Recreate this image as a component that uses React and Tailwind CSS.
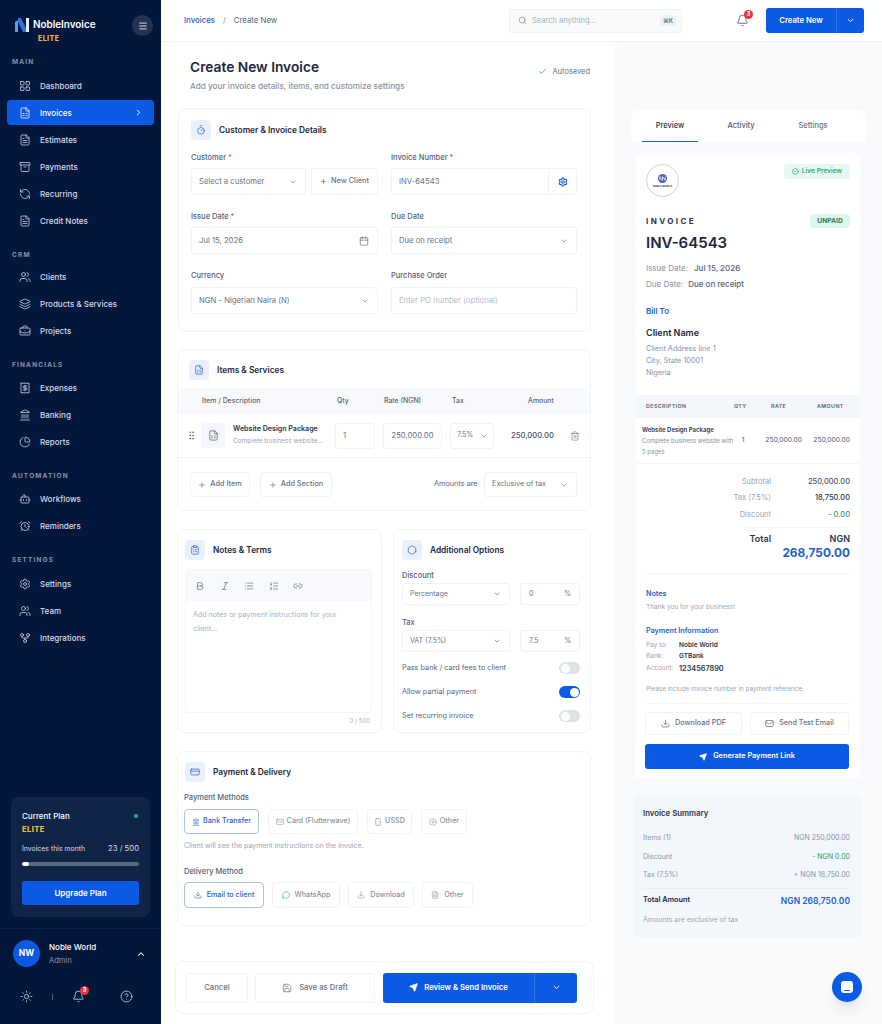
import {
  Archive, Bell, Bold, Bot, BriefcaseBusiness, Calendar, Check, ChevronDown, ChevronRight, ChevronUp,
  CircleCheck, CircleHelp, ClipboardList, CreditCard, Download, FileSpreadsheet, FileText, GitFork, GripVertical, Italic, Landmark,
  Layers, LayoutGrid, Link2, List, ListOrdered, Mail, MessageCircle, Plus, Receipt, RefreshCcw, Save, Search,
  Send, Settings, Sun, Timer, Trash2, Users, Smartphone, CirclePlus,
  AlarmClock, ChartPie, Menu, Hexagon,
} from 'lucide-react';

const sidebarGroups = [
  { label: 'MAIN', top: 'mt-[8px]', gap: 'mt-[4px]', items: [
    ['Dashboard', LayoutGrid], ['Invoices', FileSpreadsheet, true], ['Estimates', FileText],
    ['Payments', Archive], ['Recurring', RefreshCcw], ['Credit Notes', FileText],
  ] },
  { label: 'CRM', top: 'mt-[15px]', gap: 'mt-[2px]', items: [['Clients', Users], ['Products & Services', Layers], ['Projects', BriefcaseBusiness]] },
  { label: 'FINANCIALS', top: 'mt-[15px]', gap: 'mt-[3px]', items: [['Expenses', Receipt], ['Banking', Landmark], ['Reports', ChartPie]] },
  { label: 'AUTOMATION', top: 'mt-[15px]', gap: 'mt-[3px]', items: [['Workflows', Bot], ['Reminders', AlarmClock]] },
  { label: 'SETTINGS', top: 'mt-[15px]', gap: 'mt-[4px]', items: [['Settings', Settings], ['Team', Users], ['Integrations', GitFork]] },
];

function Sidebar() {
  return (
    <aside className="flex h-[1024px] w-[161px] shrink-0 flex-col bg-[#03173d] text-[#d5dce8]">
      <div className="flex h-[48px] items-start justify-between pl-[14px] pr-[8px] pt-[16px]">
        <div className="flex gap-[3px]">
          <svg viewBox="0 0 16 16" className="mt-[1px] h-[16px] w-[16px]">
            <path d="M1 15V5l3-2v12z" fill="#5b9cf5" />
            <path d="M4 1h3l5 10v4H9L4 5z" fill="#2f6fe0" />
            <path d="M12 1h3v14h-3z" fill="#e8eefb" />
          </svg>
          <div>
            <div className="text-[9.9px] font-semibold leading-[16px] text-white">NobleInvoice</div>
            <div className="ml-[5px] mt-[2px] text-[7px] font-extrabold leading-[10px] tracking-[0.06em] text-[#f0b93a]">ELITE</div>
          </div>
        </div>
        <div className="-mt-[1px] flex h-[21px] w-[21px] items-center justify-center rounded-full bg-[#223252]">
          <Menu className="h-[10px] w-[10px] text-white" />
        </div>
      </div>
      <nav className="px-[7px]">
        {sidebarGroups.map((group) => (
          <div key={group.label} className={group.top}>
            <div className="pl-[5px] text-[6.5px] font-bold leading-[12px] tracking-[0.18em] text-[#8492ab]">{group.label}</div>
            <div className={group.gap}>
              {group.items.map(([name, Icon, active]) => (
                <div key={name} className={`flex items-center rounded-[4px] pl-[12px] pr-[11px] ${active ? 'my-[1px] h-[25px] bg-[#0c5ae4] text-white' : 'h-[27px]'}`}>
                  <Icon className="h-[12px] w-[12px] shrink-0" strokeWidth={1.5} />
                  <span className="ml-[9px] flex-1 text-[8px] font-medium">{name}</span>
                  {active && <ChevronRight className="h-[9px] w-[9px]" strokeWidth={2.5} />}
                </div>
              ))}
            </div>
          </div>
        ))}
      </nav>
      <div className="mx-[11px] mb-[11px] mt-auto h-[120px] rounded-[8px] bg-[#102447] px-[11px] pt-[13px]">
        <div className="flex items-center justify-between">
          <span className="text-[8px] font-medium leading-[12px] text-white">Current Plan</span>
          <span className="mr-[1px] h-[4px] w-[4px] rounded-full bg-[#14b8a6]" />
        </div>
        <div className="mt-[3px] text-[7.5px] font-extrabold leading-[10px] tracking-[0.06em] text-[#f0b93a]">ELITE</div>
        <div className="mt-[9px] flex justify-between text-[6.9px] leading-[10px]">
          <span>Invoices this month</span><span className="text-[7.7px]">23 / 500</span>
        </div>
        <div className="mt-[8px] h-[4px] rounded-full bg-[#5a6881]">
          <div className="h-[4px] w-[7px] rounded-full bg-white" />
        </div>
        <button className="mt-[15px] h-[24px] w-full rounded-[3px] bg-[#0c5ae4] text-[8px] font-semibold text-white">Upgrade Plan</button>
      </div>
      <div className="h-[96px] border-t border-[#0f2345] px-[13px] pt-[11px]">
        <div className="flex items-center">
          <div className="flex h-[27px] w-[27px] items-center justify-center rounded-full bg-[#0c5ae4] text-[8.5px] font-bold text-white">NW</div>
          <div className="ml-[9px] flex-1">
            <div className="text-[8px] font-medium leading-[13px] text-white">Noble World</div>
            <div className="text-[7.5px] leading-[13px] text-[#8b97ad]">Admin</div>
          </div>
          <ChevronUp className="mr-[2px] h-[10px] w-[10px] text-white" strokeWidth={2.5} />
        </div>
        <div className="mt-[23px] flex items-center pl-[7px] text-[#cdd5e2]">
          <Sun className="h-[13px] w-[13px]" strokeWidth={1.5} />
          <span className="ml-[19px] h-[6px] w-px bg-[#4d5c78]" />
          <div className="relative ml-[19px]">
            <Bell className="h-[13px] w-[13px]" strokeWidth={1.5} />
            <span className="absolute -right-[4px] -top-[4px] flex h-[9px] w-[9px] items-center justify-center rounded-full bg-[#e5343f] text-[5.5px] font-bold text-white">3</span>
          </div>
          <CircleHelp className="ml-[35px] h-[13px] w-[13px]" strokeWidth={1.5} />
        </div>
      </div>
    </aside>
  );
}

function Card({ className = '', children }) {
  return <section className={`rounded-[8px] border border-[#f0f3f7] bg-white ${className}`}>{children}</section>;
}

function SectionHead({ icon: Icon, title, className = '' }) {
  return (
    <div className={`flex items-center ${className}`}>
      <div className="flex h-[20px] w-[20px] items-center justify-center rounded-[4px] bg-[#e9f0fc]">
        <Icon className="h-[10px] w-[10px] text-[#2563c9]" strokeWidth={1.7} />
      </div>
      <h2 className="ml-[8px] text-[8.3px] font-semibold text-[#1c2740]">{title}</h2>
    </div>
  );
}

function Label({ children, required, className = '' }) {
  return (
    <div className={`text-[7.5px] font-medium leading-[11px] text-[#566178] ${className}`}>
      {children}{required && <span className="text-[#e5484d]"> *</span>}
    </div>
  );
}

function Box({ children, className = '' }) {
  return (
    <div className={`flex items-center rounded-[3px] border border-[#eff2f6] bg-white text-[7.7px] text-[#697386] ${className}`}>{children}</div>
  );
}

function Select({ value, className = '', muted }) {
  return (
    <Box className={`justify-between pl-[7px] pr-[8px] ${muted ? 'text-[#9ba5b5]' : ''} ${className}`}>
      <span>{value}</span>
      <ChevronDown className="h-[8px] w-[8px] text-[#6b7588]" strokeWidth={2} />
    </Box>
  );
}

function Chip({ icon: Icon, children, active, className = '', iconClass = '' }) {
  return (
    <div className={`flex items-center justify-center gap-[3px] rounded-[4px] border text-[7.2px] font-medium ${active ? 'border-[#a9c3ea] text-[#2563c9]' : 'border-[#f1f3f7] text-[#8a93a3]'} ${className}`}>
      <Icon className={`h-[8px] w-[8px] ${iconClass}`} strokeWidth={1.7} />
      {children}
    </div>
  );
}

function Toggle({ on }) {
  return (
    <div className={`flex h-[12px] w-[21px] items-center rounded-full px-[1.5px] ${on ? 'justify-end bg-[#0c5ae4]' : 'bg-[#dfe3ea]'}`}>
      <span className="h-[9px] w-[9px] rounded-full bg-white" />
    </div>
  );
}

function CustomerCard() {
  return (
    <Card className="ml-[17px] h-[224px] w-[413px] px-[12px] pt-[11px]">
      <SectionHead icon={Timer} title="Customer & Invoice Details" />
      <div className="mt-[12px] grid grid-cols-[187px_186px] gap-x-[13px]">
        <div>
          <Label required>Customer</Label>
          <div className="mt-[5px] flex gap-[5px]">
            <Select value="Select a customer" muted className="h-[27px] w-[115px]" />
            <Box className="h-[27px] w-[67px] justify-center gap-[4px] bg-[#fbfcfe] !text-[7.3px] font-medium text-[#2563c9]">
              <Plus className="h-[7px] w-[7px]" strokeWidth={2.5} /> New Client
            </Box>
          </div>
        </div>
        <div>
          <Label required>Invoice Number</Label>
          <Box className="mt-[5px] h-[27px] justify-between pl-[7px]">
            <span>INV-64543</span>
            <div className="flex h-full w-[28px] items-center justify-center border-l border-[#eff2f6]">
              <Settings className="h-[10px] w-[10px] text-[#1d5fd0]" strokeWidth={2.6} />
            </div>
          </Box>
        </div>
        <div className="mt-[16px]">
          <Label required>Issue Date</Label>
          <Box className="mt-[5px] h-[27px] justify-between pl-[7px] pr-[8px]">
            <span>Jul 15, 2026</span>
            <Calendar className="h-[10px] w-[10px] text-[#566178]" strokeWidth={1.5} />
          </Box>
        </div>
        <div className="mt-[16px]">
          <Label>Due Date</Label>
          <Select value="Due on receipt" className="mt-[5px] h-[27px]" />
        </div>
        <div className="mt-[16px]">
          <Label>Currency</Label>
          <Select value="NGN - Nigerian Naira (N)" className="mt-[6px] h-[27px]" />
        </div>
        <div className="mt-[16px]">
          <Label>Purchase Order</Label>
          <Box className="mt-[6px] h-[27px] pl-[7px] text-[#b4bcc9]">Enter PO number (optional)</Box>
        </div>
      </div>
    </Card>
  );
}

function ItemsCard() {
  return (
    <Card className="ml-[16px] mt-[17px] h-[162px] w-[414px]">
      <SectionHead icon={FileSpreadsheet} title="Items & Services" className="pl-[11px] pt-[10px]" />
      <div className="mt-[8px] grid h-[26px] grid-cols-[135px_47px_68px_76px_1fr] items-center bg-[#f7f9fc] pl-[24px] text-[6.9px] font-medium text-[#5c667a]">
        <span>Item / Description</span><span>Qty</span><span>Rate (NGN)</span><span>Tax</span><span>Amount</span>
      </div>
      <div className="flex h-[44px] items-center border-b border-[#f0f3f7] pl-[8px]">
        <GripVertical className="h-[11px] w-[11px] text-[#6b7588]" strokeWidth={2} />
        <div className="ml-[4px] flex h-[25px] w-[24px] items-center justify-center rounded-[4px] bg-[#f3f6fa]">
          <FileSpreadsheet className="h-[11px] w-[11px] text-[#4a5468]" strokeWidth={1.5} />
        </div>
        <div className="ml-[8px] w-[102px]">
          <div className="text-[7.1px] font-semibold leading-[12px] text-[#2b354a]">Website Design Package</div>
          <div className="text-[6.5px] leading-[13px] text-[#9ba5b5]">Complete business website...</div>
        </div>
        <Box className="h-[26px] w-[40px] pl-[7px] text-[#3c465a]">1</Box>
        <Box className="ml-[8px] h-[26px] w-[59px] justify-center text-[#4a5468]">250,000.00</Box>
        <Select value="7.5%" className="ml-[8px] h-[26px] w-[44px] !pl-[6px] !pr-[5px] !text-[7px]" />
        <span className="ml-[16px] w-[44px] text-right text-[7.7px] font-medium text-[#4a5468]">250,000.00</span>
        <Trash2 className="ml-[16px] h-[10px] w-[10px] text-[#6b7588]" strokeWidth={1.5} />
      </div>
      <div className="flex items-center pl-[12px] pt-[14px]">
        <Box className="h-[25px] w-[60px] justify-center gap-[4px] !text-[7.3px] font-medium text-[#2563c9]"><Plus className="h-[8px] w-[8px]" strokeWidth={2} />Add Item</Box>
        <Box className="ml-[10px] h-[25px] w-[72px] justify-center gap-[4px] !text-[7.3px] font-medium text-[#2563c9]"><Plus className="h-[8px] w-[8px]" strokeWidth={2} />Add Section</Box>
        <span className="ml-[102px] w-[44px] whitespace-nowrap text-[7.3px] text-[#5c667a]">Amounts are</span>
        <Select value="Exclusive of tax" muted className="ml-[6px] h-[25px] w-[93px] !text-[7.3px]" />
      </div>
    </Card>
  );
}

function NotesCard() {
  const tools = [Bold, Italic, List, ListOrdered, Link2];
  return (
    <Card className="h-[204px] w-[205px] px-[7px] pt-[10px]">
      <SectionHead icon={ClipboardList} title="Notes & Terms" />
      <div className="mt-[9px] h-[144px] w-[187px] rounded-[3px] border border-[#f3f5f8]">
        <div className="flex h-[31px] items-center gap-[14.5px] bg-[#f7f9fc] pl-[9px] text-[#5c667a]">
          {tools.map((Tool, i) => <Tool key={i} className="h-[10px] w-[10px]" strokeWidth={1.6} />)}
        </div>
        <p className="px-[7px] pt-[7px] text-[7.1px] leading-[13.5px] text-[#a8b1bf]">Add notes or payment instructions for your<br />client...</p>
      </div>
      <div className="mt-[3px] w-[185px] text-right text-[6px] text-[#a8b1bf]">0 / 500</div>
    </Card>
  );
}

function OptionsCard() {
  return (
    <Card className="ml-[11px] h-[204px] w-[198px] pl-[8px] pr-[10px] pt-[10px]">
      <SectionHead icon={Hexagon} title="Additional Options" />
      <Label className="mt-[10px]">Discount</Label>
      <div className="mt-[2px] flex justify-between">
        <Select value="Percentage" className="h-[22px] w-[108px] !text-[7px]" />
        <Box className="h-[22px] w-[60px] justify-between pl-[8px] pr-[8px] !text-[7px]"><span>0</span><span>%</span></Box>
      </div>
      <Label className="mt-[12px]">Tax</Label>
      <div className="mt-[2px] flex justify-between">
        <Select value="VAT (7.5%)" className="h-[22px] w-[108px] !text-[7px]" />
        <Box className="h-[22px] w-[60px] justify-between pl-[8px] pr-[8px] !text-[7px]"><span>7.5</span><span>%</span></Box>
      </div>
      <div className="mt-[10px] flex h-[12px] items-center justify-between text-[7.3px] text-[#5c667a]"><span>Pass bank / card fees to client</span><Toggle /></div>
      <div className="mt-[12px] flex h-[12px] items-center justify-between text-[7.3px] text-[#5c667a]"><span>Allow partial payment</span><Toggle on /></div>
      <div className="mt-[12px] flex h-[12px] items-center justify-between text-[7.3px] text-[#5c667a]"><span>Set recurring invoice</span><Toggle /></div>
    </Card>
  );
}

function PaymentCard() {
  return (
    <Card className="ml-[16px] mt-[18px] h-[175px] w-[414px] px-[6px] pt-[10px]">
      <SectionHead icon={CreditCard} title="Payment & Delivery" className="pl-[1px]" />
      <Label className="mt-[10px]">Payment Methods</Label>
      <div className="mt-[6px] flex h-[25px] gap-[9px]">
        <Chip active icon={Landmark} className="w-[75px]">Bank Transfer</Chip>
        <Chip icon={Mail} className="w-[90px]">Card (Flutterwave)</Chip>
        <Chip icon={Smartphone} className="w-[45px]">USSD</Chip>
        <Chip icon={CirclePlus} className="w-[46px]">Other</Chip>
      </div>
      <p className="mt-[7px] text-[7px] leading-[10px] text-[#9ba5b5]">Client will see the payment instructions on the invoice.</p>
      <Label className="mt-[15px]">Delivery Method</Label>
      <div className="mt-[5px] flex h-[26px] gap-[8px]">
        <Chip active icon={Download} className="w-[80px] gap-[5px]">Email to client</Chip>
        <Chip icon={MessageCircle} iconClass="text-[#22a565]" className="w-[68px] gap-[5px]">WhatsApp</Chip>
        <Chip icon={Download} className="w-[66px] gap-[5px]">Download</Chip>
        <Chip icon={FileText} className="w-[51px] gap-[5px]">Other</Chip>
      </div>
    </Card>
  );
}

function FooterBar() {
  return (
    <div className="ml-[14px] mt-[35px] flex h-[53px] w-[419px] items-center rounded-[8px] border border-[#f0f3f7] bg-white pl-[10px]">
      <Box className="h-[30px] w-[62px] justify-center font-medium text-[#4a5468]">Cancel</Box>
      <Box className="ml-[7px] h-[30px] w-[120px] justify-center gap-[7px] font-medium text-[#4a5468]"><Save className="h-[10px] w-[10px]" strokeWidth={1.6} />Save as Draft</Box>
      <div className="ml-[8px] flex h-[30px] w-[194px] items-center rounded-[3px] bg-[#0c5ae4] text-white">
        <div className="flex flex-1 items-center justify-center gap-[6px] text-[7.7px] font-semibold"><Send className="h-[9px] w-[9px]" fill="currentColor" />Review & Send Invoice</div>
        <div className="flex h-full w-[43px] items-center justify-center border-l border-[#2f72e8]"><ChevronDown className="h-[9px] w-[9px]" strokeWidth={2.5} /></div>
      </div>
    </div>
  );
}

function TopBar() {
  return (
    <header className="flex h-[42px] items-center border-b border-[#eff2f6] bg-white pl-[23px]">
      <div className="flex w-[325px] items-center text-[7.8px]">
        <span className="font-medium text-[#2563c9]">Invoices</span>
        <span className="ml-[8px] text-[#8a93a3]">/</span>
        <span className="ml-[8px] text-[#566178]">Create New</span>
      </div>
      <div className="flex h-[24px] w-[173px] items-center rounded-[3px] border border-[#eef1f5] bg-[#f8fafc] pl-[8px] pr-[5px]">
        <Search className="h-[9px] w-[9px] text-[#6b7588]" strokeWidth={1.6} />
        <span className="ml-[5px] flex-1 text-[7.5px] text-[#a8b1bf]">Search anything...</span>
        <span className="rounded-[2px] bg-[#eef1f5] px-[3px] py-[1px] text-[6px] font-semibold text-[#6b7588]">⌘K</span>
      </div>
      <div className="relative ml-[54px]">
        <Bell className="h-[13px] w-[13px] text-[#4a5468]" strokeWidth={1.5} />
        <span className="absolute -right-[4px] -top-[4px] flex h-[9px] w-[9px] items-center justify-center rounded-full bg-[#e5343f] text-[5.5px] font-bold text-white">3</span>
      </div>
      <div className="ml-[17px] flex h-[25px] w-[98px] items-center rounded-[3px] bg-[#0c5ae4] text-white">
        <span className="flex-1 text-center text-[7.7px] font-semibold">Create New</span>
        <div className="flex h-full w-[28px] items-center justify-center border-l border-[#2f72e8]"><ChevronDown className="h-[9px] w-[9px]" strokeWidth={2.5} /></div>
      </div>
    </header>
  );
}

function Preview() {
  return (
    <div className="ml-[16px] mt-[68px] h-[670px] w-[235px] rounded-[8px] bg-[#f8fafd]">
      <div className="flex h-[32px] rounded-t-[8px] bg-white text-[7.5px] font-medium">
        <div className="ml-[11px] flex w-[56px] items-center justify-center border-b-[1.5px] border-[#2563c9] text-[#2b354a]">Preview</div>
        <div className="ml-[14px] flex w-[58px] items-center justify-center text-[#566178]">Activity</div>
        <div className="ml-[14px] flex w-[58px] items-center justify-center text-[#697386]">Settings</div>
      </div>
      <div className="mx-[5px] mt-[13px] h-[623px] w-[224px] bg-white">
        <div className="flex items-start justify-between px-[10px] pt-[9px]">
          <div className="flex h-[33px] w-[33px] flex-col items-center justify-center rounded-full border border-[#cfd3e0]">
            <svg viewBox="0 0 12 12" className="h-[11px] w-[11px]"><circle cx="6" cy="6" r="5" fill="#5566b8" /><path d="M3 8V4l3 4V4l3 4V4" stroke="#fff" fill="none" strokeWidth="0.8" /></svg>
            <span className="text-[2.6px] font-bold leading-[4px] text-[#2b354a]">NOBLE WORLD</span>
          </div>
          <div className="flex h-[15px] w-[66px] items-center justify-center gap-[3px] rounded-[4px] bg-[#e6f8ef] text-[6.7px] font-medium text-[#1e9e63]">
            <CircleCheck className="h-[7px] w-[7px]" strokeWidth={2} />Live Preview
          </div>
        </div>
        <div className="mt-[17px] flex h-[14px] items-center justify-between px-[10px]">
          <span className="text-[8px] font-bold tracking-[0.3em] text-[#2b354a]">INVOICE</span>
          <span className="flex h-[14px] w-[40px] items-center justify-center rounded-[4px] bg-[#dff6ea] text-[6.7px] font-bold text-[#16875a]">UNPAID</span>
        </div>
        <div className="mt-[5px] pl-[10px] text-[15px] font-semibold leading-[20px] text-[#1c2740]">INV-64543</div>
        <div className="mt-[8px] pl-[10px] text-[8px] leading-[15.5px] text-[#8a93a3]">
          <div>Issue Date:<span className="ml-[6px] font-medium text-[#566178]">Jul 15, 2026</span></div>
          <div>Due Date:<span className="ml-[5px] font-medium text-[#566178]">Due on receipt</span></div>
        </div>
        <div className="mt-[14px] pl-[10px] text-[8px] font-semibold leading-[11px] text-[#2563c9]">Bill To</div>
        <div className="mt-[9px] pl-[10px] text-[9px] font-semibold leading-[13px] text-[#1c2740]">Client Name</div>
        <div className="mt-[4px] pl-[10px] text-[7.3px] leading-[12px] text-[#8a93a3]">Client Address line 1<br />City, State 10001<br />Nigeria</div>
        <div className="mt-[16px] grid h-[23px] grid-cols-[88px_37px_46px_1fr] items-center bg-[#f3f6fa] pl-[10px] text-[5.3px] font-semibold tracking-[0.08em] text-[#566178]">
          <span>DESCRIPTION</span><span>QTY</span><span>RATE</span><span>AMOUNT</span>
        </div>
        <div className="flex h-[46px] items-center border-b border-[#f3f5f8] pl-[6px] pr-[10px]">
          <div className="w-[94px]">
            <div className="text-[6px] font-semibold leading-[11px] text-[#2b354a]">Website Design Package</div>
            <div className="text-[6px] leading-[11px] text-[#8a93a3]">Complete business website with 5 pages</div>
          </div>
          <span className="w-[14px] text-center text-[6.7px] text-[#4a5468]">1</span>
          <span className="ml-[4px] flex-1 text-center text-[6.7px] text-[#4a5468]">250,000.00</span>
          <span className="text-[6.7px] text-[#4a5468]">250,000.00</span>
        </div>
        <div className="px-[10px] pt-[9px] text-[7.5px]">
          {[['Subtotal', '250,000.00', 'text-[#4a5468]'], ['Tax (7.5%)', '18,750.00', 'text-[#2b354a]'], ['Discount', '- 0.00', 'text-[#22a565]']].map(([k, v, c]) => (
            <div key={k} className="flex h-[16.5px] items-center">
              <span className="w-[125px] text-right text-[#9ba5b5]">{k}</span>
              <span className={`flex-1 text-right font-medium ${c}`}>{v}</span>
            </div>
          ))}
          <div className="ml-[97px] mt-[4px] border-t border-[#f0f3f7] pt-[4px]">
            <div className="flex text-[9px] font-semibold leading-[14px] text-[#2b354a]">
              <span className="w-[28px] text-right">Total</span><span className="flex-1 text-right">NGN</span>
            </div>
            <div className="text-right text-[11.8px] font-bold leading-[14px] text-[#1d5fd0]">268,750.00</div>
          </div>
          <div className="mt-[13px] border-t border-[#f3f5f8]" />
        </div>
        <div className="px-[10px] pt-[14px]">
          <div className="text-[7.2px] font-semibold leading-[11px] text-[#2563c9]">Notes</div>
          <div className="mt-[3px] text-[6.5px] leading-[10px] text-[#9ba5b5]">Thank you for your business!</div>
          <div className="mt-[13px] text-[7.2px] font-semibold leading-[11px] text-[#2563c9]">Payment Information</div>
          <div className="mt-[4px] text-[6.5px] leading-[11.5px] text-[#9ba5b5]">
            <div className="flex"><span className="w-[33px]">Pay to:</span><span className="font-semibold text-[#2b354a]">Noble World</span></div>
            <div className="flex"><span className="w-[33px]">Bank:</span><span className="font-semibold text-[#2b354a]">GTBank</span></div>
            <div className="flex"><span className="w-[33px]">Account:</span><span className="text-[7.3px] font-semibold text-[#2b354a]">1234567890</span></div>
          </div>
          <div className="mt-[10px] text-[6.3px] leading-[10px] text-[#9ba5b5]">Please include invoice number in payment reference.</div>
          <div className="mt-[9px] border-t border-[#f3f5f8]" />
        </div>
        <div className="flex gap-[8px] pl-[9px] pt-[8px]">
          <Box className="h-[23px] w-[97px] justify-center gap-[5px] !text-[7.3px] font-medium text-[#2563c9]"><Download className="h-[9px] w-[9px]" />Download PDF</Box>
          <Box className="h-[23px] w-[99px] justify-center gap-[5px] !text-[7.2px] font-medium text-[#2563c9]"><Mail className="h-[9px] w-[9px]" />Send Test Email</Box>
        </div>
        <button className="ml-[9px] mt-[9px] flex h-[25px] w-[204px] items-center justify-center gap-[6px] rounded-[3px] bg-[#0c5ae4] text-[7.3px] font-semibold text-white">
          <Send className="h-[8px] w-[8px]" fill="currentColor" />Generate Payment Link
        </button>
      </div>
    </div>
  );
}

function Summary() {
  return (
    <div className="ml-[18px] mt-[16px] h-[142px] w-[229px] rounded-[6px] bg-[#f3f7fc] pl-[10px] pr-[12px] pt-[12px]">
      <div className="text-[7.8px] font-semibold leading-[11px] text-[#2b354a]">Invoice Summary</div>
      <div className="mt-[10px] text-[7px] text-[#8a93a3]">
        <div className="flex h-[18.5px] items-center justify-between"><span>Items (1)</span><span>NGN 250,000.00</span></div>
        <div className="flex h-[18.5px] items-center justify-between"><span>Discount</span><span><span>- </span><span className="text-[#22a565]">NGN 0.00</span></span></div>
        <div className="flex h-[18.5px] items-center justify-between"><span>Tax (7.5%)</span><span>+ NGN 18,750.00</span></div>
      </div>
      <div className="mt-[3px] flex items-center justify-between border-t border-[#e9eef5] pt-[6px]">
        <span className="text-[7.3px] font-semibold text-[#1c2740]">Total Amount</span>
        <span className="text-[8.5px] font-semibold text-[#1d5fd0]">NGN 268,750.00</span>
      </div>
      <div className="mt-[8px] text-[7px] text-[#9ba5b5]">Amounts are exclusive of tax</div>
    </div>
  );
}

export default function App() {
  return (
    <div className="relative flex h-[1024px] w-[882px] overflow-hidden bg-white [font-family:Inter,sans-serif]">
      <Sidebar />
      <main className="flex-1">
        <TopBar />
        <div className="flex">
          <div className="w-[454px] bg-white">
            <div className="flex items-start justify-between pl-[29px] pr-[25px] pt-[15px]">
              <div>
                <h1 className="text-[13.75px] font-semibold leading-[20px] text-[#1c2740]">Create New Invoice</h1>
                <p className="mt-[3px] text-[8.2px] font-medium leading-[12px] text-[#8a93a3]">Add your invoice details, items, and customize settings</p>
              </div>
              <div className="mt-[9px] flex items-center gap-[5px] text-[7.5px] text-[#697386]">
                <Check className="h-[9px] w-[9px] text-[#22a565]" strokeWidth={2} />Autosaved
              </div>
            </div>
            <div className="mt-[16px]">
              <CustomerCard />
              <ItemsCard />
              <div className="ml-[16px] mt-[18px] flex">
                <NotesCard />
                <OptionsCard />
              </div>
              <PaymentCard />
              <FooterBar />
            </div>
          </div>
          <div className="h-[982px] flex-1 bg-[#f8fafc]">
            <Preview />
            <Summary />
          </div>
        </div>
      </main>
      <button className="absolute left-[832px] top-[972px] flex h-[30px] w-[30px] items-center justify-center rounded-full bg-[#0c5ae4] shadow-lg">
        <span className="flex h-[12px] w-[12px] items-end justify-center rounded-[3px] bg-white pb-[2px]"><span className="h-[1px] w-[6px] rounded bg-[#0c5ae4]" /></span>
      </button>
    </div>
  );
}
